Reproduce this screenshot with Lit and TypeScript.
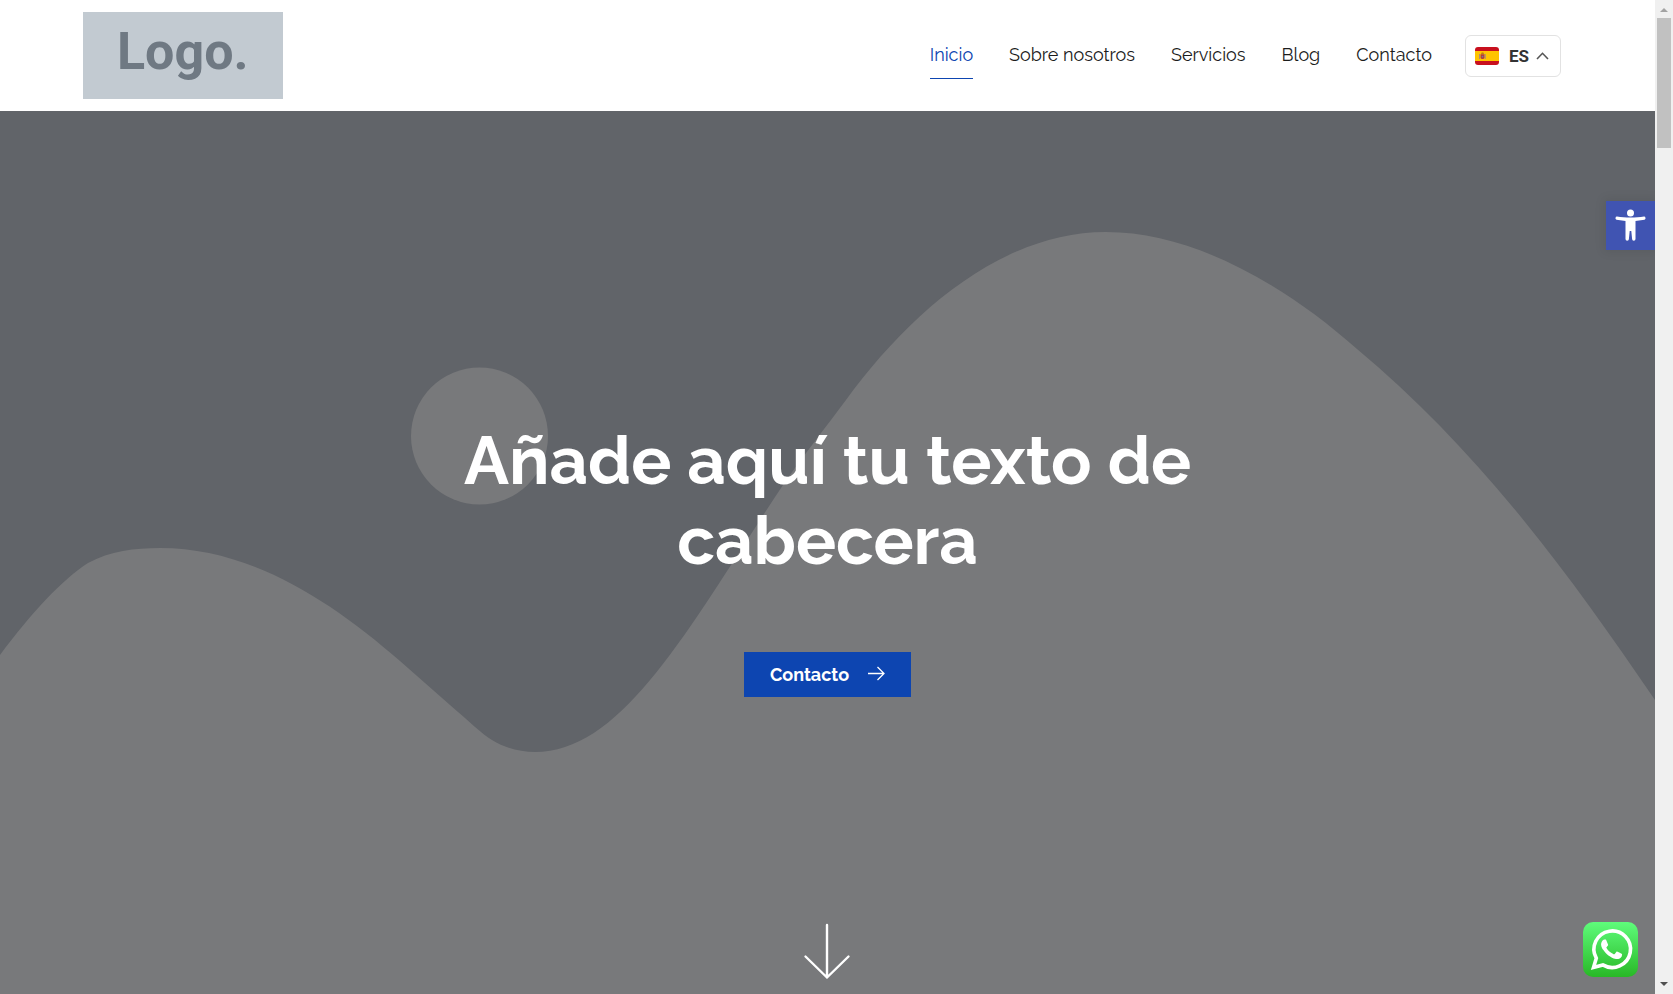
import { LitElement, html, css } from "lit";
import { customElement, property } from "lit/decorators.js";

@customElement("site-header")
class SiteHeader extends LitElement {
  @property({ type: String }) current = "Inicio";

  private links = ["Inicio", "Sobre nosotros", "Servicios", "Blog", "Contacto"];

  static styles = css`
    :host { display: block; background: #fff; }
    .bar {
      display: flex; align-items: center; justify-content: space-between;
      padding: 12px 94px 12px 5%;
    }
    .logo {
      display: flex; justify-content: center; box-sizing: border-box;
      width: 200px; height: 87px; padding-top: 8px;
      background: #c2cad1; color: #6f7983; text-decoration: none;
      font: 700 52px/64px Roboto, sans-serif;
    }
    .right { display: flex; align-items: center; gap: 33px; }
    nav { display: flex; gap: 36px; }
    .link {
      padding: 11px 0; border-bottom: 1px solid transparent;
      font: 400 18px/24px Raleway, Lato, sans-serif;
      color: #1c1c1c; text-decoration: none; white-space: nowrap;
    }
    .link.active { color: #0d45b1; border-bottom-color: #0d45b1; }
    .lang {
      display: flex; align-items: center; box-sizing: border-box;
      width: 96px; height: 42px; padding: 0 9px;
      border: 1px solid #e2e2e2; border-radius: 6px; background: #fff;
      font: 700 17px/20px Roboto, sans-serif; color: #333; cursor: pointer;
    }
    .flag { width: 24px; height: 18px; margin-right: 10px; }
    .chev { width: 13px; height: 8px; margin-left: auto; margin-right: 2px; }
  `;

  render() {
    return html`
      <header class="bar">
        <a class="logo" href="#">Logo.</a>
        <div class="right">
          <nav aria-label="Principal">
            ${this.links.map(
              (l) => html`<a class="link ${l === this.current ? "active" : ""}" href="#">${l}</a>`
            )}
          </nav>
          <button class="lang" type="button">
            <svg class="flag" viewBox="0 0 24 18" aria-hidden="true">
              <rect width="24" height="18" rx="3" fill="#c8101e" />
              <rect y="4" width="24" height="10" fill="#ffc400" />
              <rect x="4" y="7" width="1.2" height="5" fill="#b08a7a" />
              <rect x="9.6" y="7" width="1.2" height="5" fill="#b08a7a" />
              <path d="M5.6 7.2h3.8v3a1.9 1.9 0 0 1-3.8 0z" fill="#b5383a" />
              <path d="M6 6.8a1.5 1.2 0 0 1 3 0z" fill="#a86b14" />
              <circle cx="7.5" cy="9.6" r="0.9" fill="#6d7a9c" />
            </svg>
            ES
            <svg class="chev" viewBox="0 0 13 8" fill="none" stroke="#555" stroke-width="1.6" aria-hidden="true">
              <path d="M1 7 6.500 1.300 12 7" />
            </svg>
          </button>
        </div>
      </header>
    `;
  }
}

@customElement("hero-banner")
class HeroBanner extends LitElement {
  static styles = css`
    :host { display: block; position: relative; background: #616469; overflow: hidden; }
    .scene { position: absolute; inset: 0; width: 100%; height: 100%; }
    .content {
      position: relative; box-sizing: border-box; height: 100%;
      display: flex; flex-direction: column; align-items: center;
      padding: 310px 24px 14px;
    }
    h1 {
      margin: 0; max-width: 800px; text-align: center; color: #fff;
      font: 700 67px/80px Raleway, Lato, sans-serif;
    }
    .cta {
      display: flex; align-items: center; gap: 19px; box-sizing: border-box;
      height: 45px; margin-top: 71px; padding: 0 26px;
      background: #0d45b1; color: #fff; text-decoration: none;
      font: 700 18px/24px Raleway, Lato, sans-serif;
    }
    .arrow { width: 17px; height: 17px; }
    .down { margin-top: auto; display: flex; }
    .down svg { width: 49px; height: 58px; }
  `;

  render() {
    return html`
      <svg class="scene" viewBox="0 111 1655 883" preserveAspectRatio="xMidYMin slice" aria-hidden="true">
        <circle cx="479.500" cy="436" r="68.500" fill="#78797b" />
        <path
          fill="#78797b"
          d="M0 655C32 612 62 580 88 563C110 551 135 548 160 548C250 548 330 600 400 661L450 705C470 722 482 734 492 740C505 748 520 752 535 752C624 752 690 625 783 485C805 453 826 427 846 400C908 315 1000 232 1106 232C1190 232 1280 281 1357 349C1473 446 1560 560 1655 700V994H0Z"
        />
      </svg>
      <section class="content">
        <h1>Añade aquí tu texto de cabecera</h1>
        <a class="cta" href="#">
          Contacto
          <svg class="arrow" viewBox="0 0 17 17" fill="none" stroke="#fff" stroke-width="1.3" aria-hidden="true">
            <path d="M0 7.500H16M9.500 1 16 7.500 9.500 14" />
          </svg>
        </a>
        <a class="down" href="#" aria-label="Bajar">
          <svg viewBox="0 0 49 58" fill="none" stroke="#fff" stroke-width="2.4" stroke-linecap="round" stroke-linejoin="round">
            <path d="M24 3V55.500M2.500 34.500 24 55.500 45.500 34.500" />
          </svg>
        </a>
      </section>
    `;
  }
}

@customElement("app-root")
class AppRoot extends LitElement {
  static styles = css`
    :host { display: grid; grid-template-columns: 1fr 18px; height: 100vh; overflow: hidden; }
    .page { position: relative; display: flex; flex-direction: column; min-width: 0; overflow: hidden; }
    hero-banner { flex: 1; }
    .access {
      position: absolute; right: 0; top: 201px; width: 49px; height: 49px;
      display: flex; align-items: center; justify-content: center;
      background: #4054b2; box-shadow: 0 0 10px 2px rgba(0, 0, 0, 0.08);
    }
    .access svg { width: 31px; height: 33px; }
    .chat { position: absolute; right: 17px; bottom: 17px; width: 55px; height: 55px; }
    .chat svg { display: block; width: 100%; height: 100%; }
    .track {
      display: flex; flex-direction: column; align-items: center;
      justify-content: space-between; background: #f0f0f0;
    }
    .track svg { width: 18px; height: 18px; }
    .thumb { width: 14px; height: 130px; background: #c1c1c1; margin-bottom: auto; }
  `;

  render() {
    return html`
      <div class="page">
        <site-header></site-header>
        <hero-banner></hero-banner>
        <a class="access" href="#" aria-label="Accesibilidad">
          <svg viewBox="0 0 31 33" fill="#fff">
            <circle cx="15.500" cy="4" r="3.500" />
            <path d="M2 7.600C10 8.900 21 8.900 29 7.600A1.600 1.600 0 0 1 29.500 10.700L20.500 12V30A1.700 1.700 0 0 1 17.100 30L16.300 22H14.700L13.900 30A1.700 1.700 0 0 1 10.500 30V12L1.500 10.700A1.600 1.600 0 0 1 2 7.600Z" />
          </svg>
        </a>
        <a class="chat" href="#" aria-label="WhatsApp">
          <svg viewBox="0 0 55 55">
            <defs>
              <linearGradient id="g" x1="0" y1="0" x2="0" y2="1">
                <stop offset="0" stop-color="#5ffc7b" />
                <stop offset="1" stop-color="#28b826" />
              </linearGradient>
            </defs>
            <rect width="55" height="55" rx="10" fill="url(#g)" />
            <path d="M10.500 45.500 13.300 36.200A18.300 18.300 0 1 1 19.800 42.900Z" fill="none" stroke="#fff" stroke-width="3.600" stroke-linejoin="miter" />
            <path transform="translate(7.600 6.400) scale(1.740)" fill="#fff" d="M17.472 14.382c-.297-.149-1.758-.867-2.030-.967-.273-.099-.471-.148-.670.150-.197.297-.767.966-.940 1.164-.173.199-.347.223-.644.075-.297-.150-1.255-.463-2.390-1.475-.883-.788-1.480-1.761-1.653-2.059-.173-.297-.018-.458.130-.606.134-.133.298-.347.446-.520.149-.174.198-.298.298-.497.099-.198.050-.371-.025-.520-.075-.149-.669-1.612-.916-2.207-.242-.579-.487-.500-.669-.510-.173-.008-.371-.010-.570-.010-.198 0-.520.074-.792.372-.272.297-1.040 1.016-1.040 2.479 0 1.462 1.065 2.875 1.213 3.074.149.198 2.096 3.200 5.077 4.487.709.306 1.262.489 1.694.625.712.227 1.360.195 1.871.118.571-.085 1.758-.719 2.006-1.413.248-.694.248-1.289.173-1.413-.074-.124-.272-.198-.570-.347" />
          </svg>
        </a>
      </div>
      <div class="track" aria-hidden="true">
        <svg viewBox="0 0 18 18"><path d="M5 12h8L9 8z" fill="#a3a3a3" /></svg>
        <div class="thumb"></div>
        <svg viewBox="0 0 18 18"><path d="M5 6h8l-4 4z" fill="#505050" /></svg>
      </div>
    `;
  }
}
